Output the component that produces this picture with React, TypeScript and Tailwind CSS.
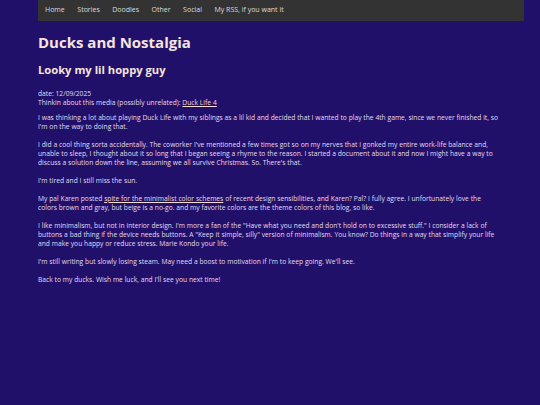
const navItems = ["Home", "Stories", "Doodles", "Other", "Social", "My RSS, if you want it"];

export default function App() {
  return (
    <div
      className="min-h-[405px] w-full bg-[#21106a] pl-[38px] pr-[16px] text-[#e4dcee]"
      style={{ fontFamily: '"Open Sans", sans-serif' }}
    >
      <nav className="flex h-[21px] items-center gap-[12.5px] bg-[#333333] px-[7px] text-[7px] text-[#dddddd]">
        {navItems.map((item) => (
          <a key={item} href="#">
            {item}
          </a>
        ))}
      </nav>

      <h1 className="mt-[11px] text-[15px] font-bold leading-[20px] text-[#f6e4dc]">Ducks and Nostalgia</h1>
      <h2 className="mt-[10px] text-[11.2px] font-bold leading-[16px] text-[#f6e4dc]">Looky my lil hoppy guy</h2>

      <div className="mt-[11px] w-[463px] text-[6.7px] leading-[9px] [word-spacing:0.1px]">
        <p>date: 12/09/2025</p>
        <p>
          Thinkin about this media (possibly unrelated):{" "}
          <a href="#" className="text-[#f3dcd4] underline">
            Duck Life 4
          </a>
        </p>

        <div className="mt-[6px] flex flex-col gap-[9px]">
          <p>
            I was thinking a lot about playing Duck Life with my siblings as a lil kid and decided that I wanted to play the 4th game, since we never finished it, so I'm on the way to doing that.
          </p>
          <p>
            I did a cool thing sorta accidentally. The coworker I've mentioned a few times got so on my nerves that I gonked my entire work-life balance and, unable to sleep, I thought about it so long that I began seeing a rhyme to the reason. I started a document about it and now I might have a way to discuss a solution down the line, assuming we all survive Christmas. So. There's that.
          </p>
          <p>I'm tired and I still miss the sun.</p>
          <p>
            My pal Karen posted{" "}
            <a href="#" className="text-[#f3dcd4] underline">
              spite for the minimalist color schemes
            </a>{" "}
            of recent design sensibilities, and Karen? Pal? I fully agree. I unfortunately love the colors brown and gray, but beige is a no-go. and my favorite colors are the theme colors of this blog, so like.
          </p>
          <p>
            I like minimalism, but not in interior design. I'm more a fan of the "Have what you need and don't hold on to excessive stuff." I consider a lack of buttons a bad thing if the device needs buttons. A "Keep it simple, silly" version of minimalism. You know? Do things in a way that simplify your life and make you happy or reduce stress. Marie Kondo your life.
          </p>
          <p>I'm still writing but slowly losing steam. May need a boost to motivation if I'm to keep going. We'll see.</p>
          <p>Back to my ducks. Wish me luck, and I'll see you next time!</p>
        </div>
      </div>
    </div>
  );
}
